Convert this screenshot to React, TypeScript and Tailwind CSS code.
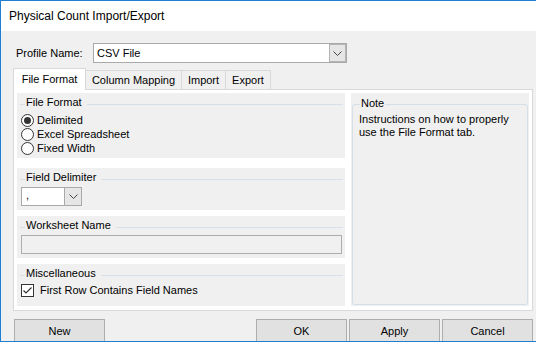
import React from 'react';

const Chevron = () => (
  <svg width="9" height="5" viewBox="0 0 9 5" className="block">
    <path d="M0.5 0.5 L4.5 4.5 L8.5 0.5" fill="none" stroke="#444" strokeWidth="1" />
  </svg>
);

function Radio({ checked, label }: { checked?: boolean; label: string }) {
  return (
    <div className="flex h-[14px] items-center pl-[4px]">
      <svg width="13" height="13" viewBox="0 0 13 13" className="block shrink-0">
        <circle cx="6.5" cy="6.5" r="6" fill="#fff" stroke="#333" strokeWidth="1" />
        {checked && <circle cx="6.5" cy="6.5" r="3.5" fill="#333" />}
      </svg>
      <span className="ml-[3px]">{label}</span>
    </div>
  );
}

function GroupHeader({ title }: { title: string }) {
  return (
    <div className="flex h-[13px] pr-[2px]">
      <div className="ml-[3px] mt-[8px] h-px w-[5px] bg-[#d8dfe6]" />
      <span className="px-[1px] leading-[13px]">{title}</span>
      <div className="ml-[4px] mt-[8px] h-px flex-1 bg-[#d8dfe6]" />
    </div>
  );
}

function Group({ title, h, children }: { title: string; h: string; children?: React.ReactNode }) {
  return (
    <div className={`flow-root bg-[#f0f0f0] pt-[3px] ${h}`}>
      <GroupHeader title={title} />
      {children}
    </div>
  );
}

function Tab({ label, active, w, first }: { label: string; active?: boolean; w: string; first?: boolean }) {
  return (
    <div
      className={[
        'flex items-center justify-center border-t border-r border-[#d9d9d9]',
        first ? 'border-l' : '',
        active ? 'relative z-10 -mb-px h-[22px] bg-white' : 'mt-[2px] h-[19px] bg-[#f0f0f0]',
        w,
      ].join(' ')}
    >
      {label}
    </div>
  );
}

function Button({ label }: { label: string }) {
  return (
    <div className="flex h-[25px] w-[91px] shrink-0 items-center justify-center border border-[#adadad] bg-[#e1e1e1]">
      {label}
    </div>
  );
}

export default function App() {
  return (
    <div className="flex h-[342px] w-[536px] flex-col overflow-hidden border-y border-l border-[#1c7fd3] font-['Liberation_Sans',Arial,sans-serif] text-black">
      <div className="flex h-[30px] shrink-0 items-center bg-white pl-[8px] text-[12px]">Physical Count Import/Export</div>

      <div className="flex-1 overflow-hidden bg-[#f0f0f0] text-[11px]">
        {/* profile row */}
        <div className="mt-[12px] flex h-[20px] items-center">
          <span className="ml-[15px] w-[77px]">Profile Name:</span>
          <div className="flex h-[20px] w-[254px] items-stretch border border-[#a9a9a9] bg-white">
            <span className="flex-1 self-center pl-[3px]">CSV File</span>
            <div className="flex w-[17px] items-center justify-center border border-[#b4b4b4] bg-[#e6e6e6]">
              <Chevron />
            </div>
          </div>
        </div>

        {/* tabs */}
        <div className="ml-[12px] mt-[5px] flex items-start">
          <Tab label="File Format" active first w="w-[73px]" />
          <Tab label="Column Mapping" w="w-[96px]" />
          <Tab label="Import" w="w-[44px]" />
          <Tab label="Export" w="w-[45px]" />
        </div>

        <div className="ml-[12px] flex h-[222px] w-[520px] gap-[6px] border border-[#d9d9d9] bg-white px-[3px] pt-[3px]">
          <div className="flex w-[328px] flex-col">
            <Group title="File Format" h="h-[65px]">
              <div className="mt-[4px]">
                <Radio checked label="Delimited" />
                <Radio label="Excel Spreadsheet" />
                <Radio label="Fixed Width" />
              </div>
            </Group>

            <div className="mt-[10px]">
              <Group title="Field Delimiter" h="h-[42px]">
                <div className="ml-[4px] mt-[3px] flex h-[19px] w-[61px] border border-[#a9a9a9] bg-white">
                  <span className="flex-1 pl-[4px] leading-[15px]">,</span>
                  <div className="flex w-[17px] items-center justify-center border-l border-[#a9a9a9] bg-[#e6e6e6]">
                    <Chevron />
                  </div>
                </div>
              </Group>
            </div>

            <div className="mt-[6px]">
              <Group title="Worksheet Name" h="h-[42px]">
                <div className="ml-[4px] mt-[3px] h-[19px] w-[321px] border border-[#adadad] bg-[#f0f0f0]" />
              </Group>
            </div>

            <div className="mt-[6px]">
              <Group title="Miscellaneous" h="h-[42px]">
                <div className="mt-[4px] flex h-[13px] items-center pl-[4px]">
                  <svg width="13" height="13" viewBox="0 0 13 13" className="block shrink-0">
                    <rect x="0.5" y="0.5" width="12" height="12" fill="#fff" stroke="#333" />
                    <path d="M2.5 6.5 L5 9 L10.5 3.5" fill="none" stroke="#333" strokeWidth="1.2" />
                  </svg>
                  <span className="ml-[6px]">First Row Contains Field Names</span>
                </div>
              </Group>
            </div>
          </div>

          <div className="h-[213px] flex-1 bg-[#f0f0f0] px-[1px] pt-[11px]">
            <div className="relative h-[201px] rounded-[3px] border border-[#d5dfe7]">
              <span className="absolute -top-[8px] left-[7px] bg-[#f0f0f0] px-px leading-[13px]">Note</span>
              <p className="pl-[6px] pt-[8px] leading-[13px]">
                Instructions on how to properly
                <br />
                use the File Format tab.
              </p>
            </div>
          </div>
        </div>

        {/* buttons */}
        <div className="mt-[8px] flex">
          <div className="ml-[13px]">
            <Button label="New" />
          </div>
          <div className="ml-[151px] flex gap-[2px]">
            <Button label="OK" />
            <Button label="Apply" />
            <Button label="Cancel" />
          </div>
        </div>
      </div>
    </div>
  );
}
